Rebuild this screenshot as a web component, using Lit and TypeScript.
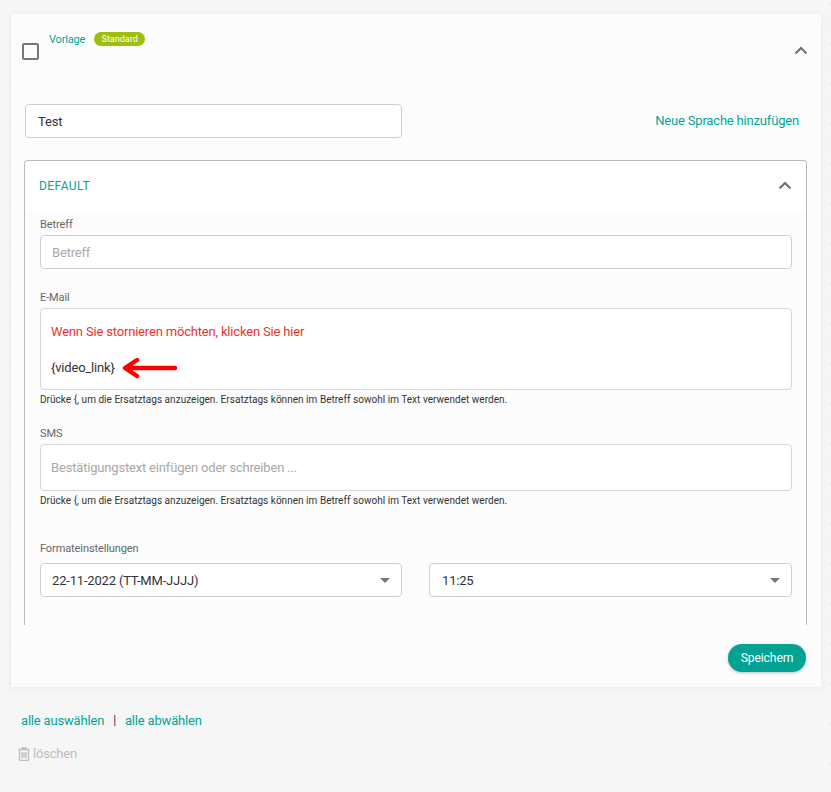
import { LitElement, html, css } from "lit";
import { customElement } from "lit/decorators.js";

const chevron = html`<svg class="chev" width="14" height="9" viewBox="0 0 14 9"><path d="M1.5 7.5 7 2l5.5 5.5" fill="none" stroke="#6f6f6f" stroke-width="2"/></svg>`;
const hint = "Drücke {, um die Ersatztags anzuzeigen. Ersatztags können im Betreff sowohl im Text verwendet werden.";

@customElement("app-root")
export class AppRoot extends LitElement {
  static styles = css`
    :host { display: block; width: 831px; height: 792px; box-sizing: border-box; padding: 14px 10px 0 11px; overflow: hidden;
      font-family: Roboto, "Liberation Sans", sans-serif; color: #333; letter-spacing: -0.18px;
      background-color: #f6f6f6;
      background-image: radial-gradient(circle at center, #eeeeee 0, #eeeeee 1px, transparent 1.2px);
      background-size: 20px 20px; background-position: 0 -6px; }
    * { box-sizing: border-box; }
    .card { height: 673px; background: #fcfcfc; box-shadow: 0 1px 8px rgba(0,0,0,.05); border-radius: 2px; padding: 18px 14px 0 11px; display: flex; flex-direction: column; }
    .head { height: 72px; display: flex; align-items: flex-start; position: relative; }
    .check { width: 17px; height: 17px; border: 2px solid #777; border-radius: 2px; margin-top: 11px; flex: none; }
    .title { display: flex; align-items: center; gap: 9px; margin-left: 10px; color: #00a597; font-size: 11px; height: 14px; }
    .badge { background: #9dbf0b; color: #fff; font-size: 9px; font-weight: 400; letter-spacing: 0; height: 14px; width: 51px; border-radius: 7px; display: flex; align-items: center; justify-content: center; }
    .head .chev { margin-left: auto; margin-top: 14px; margin-right: -1px; }
    .name { display: flex; align-items: center; justify-content: space-between; padding: 0 8px 0 3px; height: 34px; }
    .input { border: 1px solid #cfcfcf; border-radius: 4px; background: #fff; display: flex; align-items: center; padding: 0 11px; font-size: 13px; height: 34px; }
    .name .input { width: 377px; color: #333; padding: 0 12px; }
    .add { color: #00a597; font-size: 13px; padding-bottom: 2px; }
    .panel { margin: 22px 0 0 2px; width: 783px; height: 465px; border: 1px solid #b9b9b9; border-bottom: 0; border-radius: 4px 4px 0 0; display: flex; flex-direction: column; }
    .phead { height: 49px; flex: none; background: #fff; border-radius: 4px 4px 0 0; display: flex; align-items: center; justify-content: space-between; padding: 0 14px 0 14px; color: #00a597; font-size: 12px; letter-spacing: 0.45px; }
    .pbody { padding: 8px 14px 0 15px; display: flex; flex-direction: column; }
    label { display: block; font-size: 11px; line-height: 13px; color: #666; margin-bottom: 4px; letter-spacing: -0.1px; }
    .ph { color: #a8a8a8; }
    .field { margin-bottom: 22px; }
    .editor { height: 82px; border: 1px solid #d6d6d6; border-radius: 4px; background: #fff; padding: 15px 10px 0; font-size: 13px; line-height: 15px; }
    .red { color: #e8352b; }
    .link-line { margin-top: 21px; display: flex; align-items: center; height: 15px; gap: 5px; }
    .link-line svg { flex: none; margin-top: 1px; }
    .sms { height: 47px; border: 1px solid #d6d6d6; border-radius: 4px; background: #fff; padding: 0 10px; display: flex; align-items: center; font-size: 13px; color: #a8a8a8; }
    .hint { font-size: 10px; line-height: 11px; color: #333; margin-top: 4px; letter-spacing: 0.03px; }
    .h-email { margin-bottom: 22px; }
    .h-sms { margin-bottom: 36px; }
    .format { margin-bottom: 8px; }
    .selects { display: flex; gap: 27px; }
    .select { flex: 0 0 362px; justify-content: space-between; padding-right: 11px; }
    .select + .select { flex: 0 0 363px; padding-left: 12px; }
    .tri { width: 0; height: 0; border-left: 5px solid transparent; border-right: 5px solid transparent; border-top: 5px solid #777; }
    .foot { display: flex; justify-content: flex-end; margin-top: 19px; }
    .save { width: 78px; height: 28px; border-radius: 14px; border: 0; background: #02a393; color: #fff; font: 12px Roboto, sans-serif; letter-spacing: -0.05px; box-shadow: 0 1px 3px rgba(0,0,0,.25); margin-right: 1px; }
    .links { display: flex; align-items: center; padding: 26px 0 0 10px; font-size: 13px; line-height: 15px; color: #00a597; }
    .sep { color: #333; font-size: 12px; margin: 0 9px; }
    .del { display: flex; align-items: center; gap: 3px; margin: 18px 0 0 7px; font-size: 13px; line-height: 15px; color: #bdbdbd; }
  `;

  render() {
    return html`
      <div class="card">
        <div class="head">
          <div class="check"></div>
          <div class="title"><span>Vorlage</span><span class="badge">Standard</span></div>
          ${chevron}
        </div>
        <div class="name">
          <div class="input">Test</div>
          <span class="add">Neue Sprache hinzufügen</span>
        </div>
        <div class="panel">
          <div class="phead"><span>DEFAULT</span>${chevron}</div>
          <div class="pbody">
            <div class="field">
              <label>Betreff</label>
              <div class="input ph">Betreff</div>
            </div>
            <label>E-Mail</label>
            <div class="editor">
              <div class="red">Wenn Sie stornieren möchten, klicken Sie hier</div>
              <div class="link-line">
                <span>{video_link}</span>
                <svg width="60" height="22" viewBox="0 0 60 22"><path d="M55 11H6M17 3 5 11l12 8" fill="none" stroke="#f00" stroke-width="4.5" stroke-linecap="round" stroke-linejoin="round"/></svg>
              </div>
            </div>
            <div class="hint h-email">${hint}</div>
            <label>SMS</label>
            <div class="sms">Bestätigungstext einfügen oder schreiben ...</div>
            <div class="hint h-sms">${hint}</div>
            <label class="format">Formateinstellungen</label>
            <div class="selects">
              <div class="input select">22-11-2022 (TT-MM-JJJJ)<span class="tri"></span></div>
              <div class="input select">11:25<span class="tri"></span></div>
            </div>
          </div>
        </div>
        <div class="foot"><button class="save">Speichern</button></div>
      </div>
      <div class="links"><span>alle auswählen</span><span class="sep">|</span><span>alle abwählen</span></div>
      <div class="del">
        <svg width="12" height="14" viewBox="0 0 12 14"><path d="M4 2V1h4v1M.5 2.5h11M1.5 2.5v10a1 1 0 0 0 1 1h7a1 1 0 0 0 1-1v-10M4 5v6M6 5v6M8 5v6" fill="none" stroke="#bfbfbf" stroke-width="1.3"/></svg>
        <span>löschen</span>
      </div>
    `;
  }
}
